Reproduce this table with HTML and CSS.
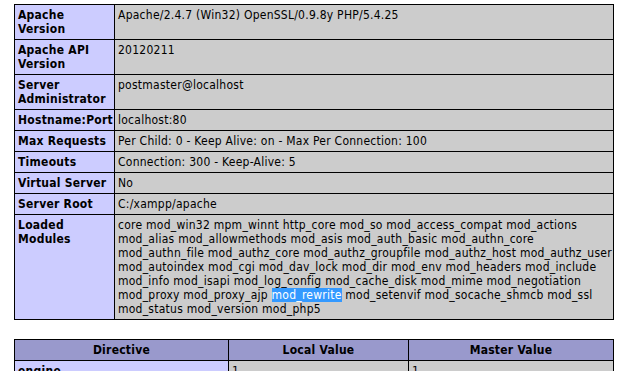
FILE: index.html
```html
<!DOCTYPE html>
<html lang="en">
<head>
  <meta charset="UTF-8">
  <title>phpinfo()</title>
  <link rel="stylesheet" href="styles.css">
</head>
<body>

  <div class="center">

    <!-- apache2handler -->
    <table class="info">
      <tr><td class="e">Apache Version</td><td class="v">Apache/2.4.7 (Win32) OpenSSL/0.9.8y PHP/5.4.25</td></tr>
      <tr><td class="e">Apache API Version</td><td class="v">20120211</td></tr>
      <tr><td class="e">Server Administrator</td><td class="v">postmaster@localhost</td></tr>
      <tr><td class="e">Hostname:Port</td><td class="v">localhost:80</td></tr>
      <tr><td class="e">Max Requests</td><td class="v">Per Child: 0 - Keep Alive: on - Max Per Connection: 100</td></tr>
      <tr><td class="e">Timeouts</td><td class="v">Connection: 300 - Keep-Alive: 5</td></tr>
      <tr><td class="e">Virtual Server</td><td class="v">No</td></tr>
      <tr><td class="e">Server Root</td><td class="v">C:/xampp/apache</td></tr>
      <tr>
        <td class="e">Loaded Modules</td>
        <td class="v">core mod_win32 mpm_winnt http_core mod_so mod_access_compat mod_actions<br>
          mod_alias mod_allowmethods mod_asis mod_auth_basic mod_authn_core<br>
          mod_authn_file mod_authz_core mod_authz_groupfile mod_authz_host mod_authz_user<br>
          mod_autoindex mod_cgi mod_dav_lock mod_dir mod_env mod_headers mod_include<br>
          mod_info mod_isapi mod_log_config mod_cache_disk mod_mime mod_negotiation<br>
          mod_proxy mod_proxy_ajp <span class="sel">mod_rewrite</span> mod_setenvif mod_socache_shmcb mod_ssl<br>
          mod_status mod_version mod_php5</td>
      </tr>
    </table>

    <table class="info directives">
      <tr class="h"><th class="c1">Directive</th><th class="c2">Local Value</th><th class="c3">Master Value</th></tr>
      <tr><td class="e">engine</td><td class="v">1</td><td class="v">1</td></tr>
      <tr><td class="e">last_modified</td><td class="v">0</td><td class="v">0</td></tr>
    </table>

  </div>

</body>
</html>
```

FILE: styles.css
```css
body {
  margin: 0;
  background-color: #fff;
  color: #000;
  font-family: "DejaVu Sans Condensed", "DejaVu Sans", sans-serif;
}
.center {
  padding: 4px 0 0 14px;
}
table.info {
  border-collapse: collapse;
  width: 600px;
  table-layout: fixed;
  margin-bottom: 19px;
}
td, th {
  border: 1px solid #000;
  font-size: 12px;
  line-height: 14px;
  letter-spacing: 0.25px;
  padding: 3px 3px;
  vertical-align: top;
  text-align: left;
  white-space: nowrap;
}
.info td.e {
  width: 93px;
  white-space: normal;
}
.e {
  background-color: #ccf;
  font-weight: bold;
}
.v {
  background-color: #ccc;
}
.h th {
  background-color: #99c;
  font-weight: bold;
  text-align: center;
}
.sel {
  background-color: #3399ff;
  color: #fff;
}
/* column widths of the directives table */
.directives .c1 { width: 207px; }
.directives .c2 { width: 173px; }
.directives .c3 { width: auto; }
.directives td.e { width: auto; }
```
